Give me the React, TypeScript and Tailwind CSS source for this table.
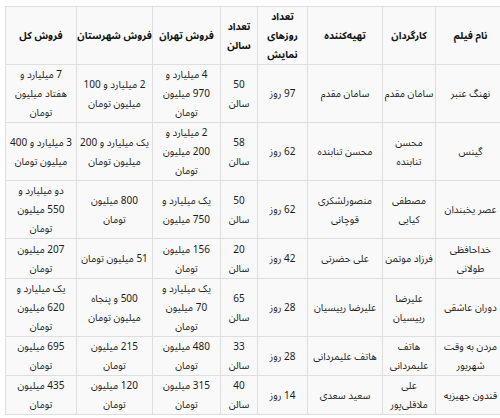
const headers: string[][] = [
  ['نام فیلم'],
  ['کارگردان'],
  ['تهیه‌کننده'],
  ['تعداد', 'روزهای', 'نمایش'],
  ['تعداد', 'سالن'],
  ['فروش تهران'],
  ['فروش شهرستان'],
  ['فروش کل'],
];

// each cell is a list of lines, right-to-left column order
const rows: { h: string; cells: string[][] }[] = [
  {
    h: 'h-[57px]',
    cells: [
      ['نهنگ عنبر'],
      ['سامان مقدم'],
      ['سامان مقدم'],
      ['97 روز'],
      ['50', 'سالن'],
      ['4 میلیارد و', '970 میلیون', 'تومان'],
      ['2 میلیارد و 100', 'میلیون تومان'],
      ['7 میلیارد و', 'هفتاد میلیون', 'تومان'],
    ],
  },
  {
    h: 'h-[58px]',
    cells: [
      ['گینس'],
      ['محسن', 'تنابنده'],
      ['محسن تنابنده'],
      ['62 روز'],
      ['58', 'سالن'],
      ['2 میلیارد و', '200 میلیون', 'تومان'],
      ['یک میلیارد و 200', 'میلیون تومان'],
      ['3 میلیارد و 400', 'میلیون تومان'],
    ],
  },
  {
    h: 'h-[57px]',
    cells: [
      ['عصر یخبندان'],
      ['مصطفی', 'کیایی'],
      ['منصورلشکری', 'قوچانی'],
      ['62 روز'],
      ['50', 'سالن'],
      ['یک میلیارد و', '750 میلیون'],
      ['800 میلیون', 'تومان'],
      ['دو میلیارد و', '550 میلیون', 'تومان'],
    ],
  },
  {
    h: 'h-[40px]',
    cells: [
      ['خداحافظی', 'طولانی'],
      ['فرزاد موتمن'],
      ['علی حضرتی'],
      ['42 روز'],
      ['20', 'سالن'],
      ['156 میلیون', 'تومان'],
      ['51 میلیون تومان'],
      ['207 میلیون', 'تومان'],
    ],
  },
  {
    h: 'h-[57px]',
    cells: [
      ['دوران عاشقی'],
      ['علیرضا', 'رییسیان'],
      ['علیرضا رییسیان'],
      ['28 روز'],
      ['65', 'سالن'],
      ['یک میلیارد و', '70 میلیون', 'تومان'],
      ['500 و پنجاه', 'میلیون تومان'],
      ['یک میلیارد و', '620 میلیون', 'تومان'],
    ],
  },
  {
    h: 'h-[37px]',
    cells: [
      ['مردن به وقت', 'شهریور'],
      ['هاتف', 'علیمردانی'],
      ['هاتف علیمردانی'],
      ['28 روز'],
      ['33', 'سالن'],
      ['480 میلیون', 'تومان'],
      ['215 میلیون', 'تومان'],
      ['695 میلیون', 'تومان'],
    ],
  },
  {
    h: 'h-[39px]',
    cells: [
      ['قندون جهیزیه'],
      ['علی', 'ملاقلی‌پور'],
      ['سعید سعدی'],
      ['14 روز'],
      ['40', 'سالن'],
      ['315 میلیون', 'تومان'],
      ['120 میلیون', 'تومان'],
      ['435 میلیون', 'تومان'],
    ],
  },
];

// widths right to left
const colWidths = ['w-[70px]', 'w-[53px]', 'w-[75px]', 'w-[50px]', 'w-[37px]', 'w-[68px]', 'w-[76px]', 'w-[71px]'];

function Lines({ lines }: { lines: string[] }) {
  return (
    <>
      {lines.map((l, i) => (
        <div key={i} className="whitespace-nowrap">
          {l}
        </div>
      ))}
    </>
  );
}

export default function App() {
  return (
    <div className="h-[418px] w-[500px] overflow-hidden bg-white pl-[5px] pt-[6px] font-['Noto_Sans_Arabic','Noto_Naskh_Arabic','DejaVu_Sans',sans-serif]">
      <table
        dir="rtl"
        className="w-[500px] table-fixed border-collapse bg-[#f9f9f9] text-[10px] leading-[19px] text-[#1c1c1c]"
      >
        <colgroup>
          {colWidths.map((w, i) => (
            <col key={i} className={w} />
          ))}
        </colgroup>
        <thead>
          <tr className="h-[57px]">
            {headers.map((h, i) => (
              <th
                key={i}
                className="overflow-hidden border border-[#dedede] px-0 text-center align-middle font-bold text-[#111]"
              >
                <Lines lines={h} />
              </th>
            ))}
          </tr>
        </thead>
        <tbody>
          {rows.map((r, ri) => (
            <tr key={ri} className={r.h}>
              {r.cells.map((c, ci) => (
                <td
                  key={ci}
                  className="overflow-hidden border border-[#dedede] px-0 text-center align-middle"
                >
                  <Lines lines={c} />
                </td>
              ))}
            </tr>
          ))}
        </tbody>
      </table>
    </div>
  );
}
